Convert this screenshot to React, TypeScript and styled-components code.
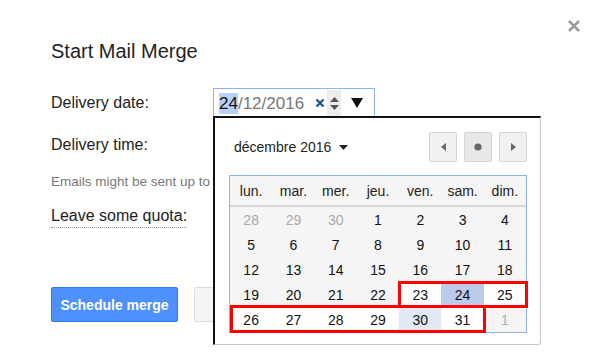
import styled, { createGlobalStyle } from 'styled-components';

const GlobalStyle = createGlobalStyle`
  html, body {
    margin: 0;
    padding: 0;
    background: #fff;
  }
  body {
    font-family: "Liberation Sans", Arial, sans-serif;
    color: #222;
  }
`;

const Dialog = styled.div`
  position: relative;
  width: 598px;
  height: 360px;
  box-sizing: border-box;
  padding: 38px 0 0 51px;
  overflow: hidden;
`;

const CloseButton = styled.div`
  position: absolute;
  top: 18px;
  right: 16px;
  width: 16px;
  height: 16px;
  display: flex;
  align-items: center;
  justify-content: center;
`;

const Title = styled.h1`
  margin: 0 0 24px;
  font-size: 20px;
  font-weight: normal;
  line-height: 26px;
  color: #222;
`;

const FieldRow = styled.div<{ $height?: number; $gap?: number }>`
  display: flex;
  align-items: center;
  height: ${(p) => p.$height ?? 30}px;
  margin-bottom: ${(p) => p.$gap ?? 0}px;
`;

const Label = styled.div<{ $dotted?: boolean }>`
  width: 162px;
  font-size: 16px;
  line-height: 20px;
  color: #222;
  ${(p) =>
    p.$dotted &&
    `
    width: auto;
    border-bottom: 1px dotted #999;
    padding-bottom: 1px;
  `}
`;

const Hint = styled.div`
  font-size: 13.5px;
  line-height: 16px;
  color: #777;
  white-space: nowrap;
  margin: 14px 0 16px;
`;

const DateInput = styled.div`
  display: flex;
  align-items: center;
  width: 162px;
  height: 30px;
  box-sizing: border-box;
  border: 1px solid #8ab2f4;
  padding: 0 6px 0 5px;
  font-size: 17px;
`;

const DatePart = styled.span<{ $selected?: boolean }>`
  color: ${(p) => (p.$selected ? '#111' : '#777')};
  background: ${(p) => (p.$selected ? '#b7d3fb' : 'transparent')};
  line-height: 21px;
`;

const ClearIcon = styled.div`
  margin-left: 11px;
  display: flex;
  align-items: center;
`;

const Spinner = styled.div`
  margin-left: 2px;
  width: 14px;
  height: 26px;
  background: #ececec;
  display: flex;
  flex-direction: column;
  align-items: center;
  justify-content: center;
  gap: 3px;
`;

const DropArrow = styled.div`
  margin-left: 10px;
  display: flex;
  align-items: center;
`;

const Actions = styled.div`
  display: flex;
  gap: 16px;
  margin-top: 59px;
`;

const Button = styled.button<{ $primary?: boolean }>`
  height: 35px;
  width: 127px;
  padding: 0;
  border-radius: 2px;
  font-family: "Liberation Sans", Arial, sans-serif;
  font-size: 14px;
  font-weight: bold;
  border: 1px solid ${(p) => (p.$primary ? '#3079ed' : '#dcdcdc')};
  background: ${(p) => (p.$primary ? '#4d90fe' : '#f5f5f5')};
  color: ${(p) => (p.$primary ? '#fff' : '#444')};
`;

const Popup = styled.div`
  position: absolute;
  left: 213px;
  top: 116px;
  width: 328px;
  height: 229px;
  box-sizing: border-box;
  background: #fff;
  border-top: 2px solid #111;
  border-left: 2px solid #111;
  border-right: 1px solid #c8c8c8;
  border-bottom: 1px solid #c8c8c8;
  border-bottom-right-radius: 3px;
  padding: 14px 13px 0 14px;
`;

const PopupHeader = styled.div`
  display: flex;
  align-items: center;
  justify-content: space-between;
  height: 30px;
  padding-left: 5px;
  margin-bottom: 13px;
`;

const MonthLabel = styled.div`
  display: flex;
  align-items: center;
  gap: 8px;
  font-size: 14px;
  color: #222;
`;

const NavGroup = styled.div`
  display: flex;
  gap: 7px;
`;

const NavButton = styled.div<{ $pressed?: boolean }>`
  width: 28px;
  height: 30px;
  box-sizing: border-box;
  border: 1px solid #d4d4d4;
  border-radius: 2px;
  background: ${(p) => (p.$pressed ? '#e8e8e8' : '#f1f1f1')};
  display: flex;
  align-items: center;
  justify-content: center;
`;

const Calendar = styled.div`
  position: relative;
  width: 298px;
  box-sizing: border-box;
  border: 1px solid #8ab2f4;
  background: #f5f5f5;
`;

const WeekHeader = styled.div`
  display: grid;
  grid-template-columns: repeat(7, 1fr);
  height: 29px;
  align-items: center;
  border-bottom: 2px solid #d6d6d6;
  font-size: 14px;
  color: #222;
  text-align: center;
`;

const DayGrid = styled.div`
  display: grid;
  grid-template-columns: repeat(7, 1fr);
  grid-auto-rows: 25px;
`;

const Day = styled.div<{ $muted?: boolean; $bg?: string }>`
  display: flex;
  align-items: center;
  justify-content: center;
  font-size: 14px;
  color: ${(p) => (p.$muted ? '#aaa' : '#111')};
  background: ${(p) => p.$bg ?? 'transparent'};
`;

const Mark = styled.div`
  position: absolute;
  box-sizing: border-box;
  border: 3px solid #f00;
  pointer-events: none;
`;

const weekdays = ['lun.', 'mar.', 'mer.', 'jeu.', 'ven.', 'sam.', 'dim.'];

type Cell = { n: number; muted?: boolean; bg?: string };

const cells: Cell[] = [
  { n: 28, muted: true },
  { n: 29, muted: true },
  { n: 30, muted: true },
  ...Array.from({ length: 31 }, (_, i) => {
    const n = i + 1;
    let bg: string | undefined;
    if (n === 24) bg = '#bccbe9';
    else if (n === 30) bg = '#e2e9f6';
    else if (n >= 23) bg = '#fff';
    return { n, bg };
  }),
  { n: 1, muted: true },
];

export default function App() {
  return (
    <>
      <GlobalStyle />
      <Dialog>
        <CloseButton>
          <svg width="14" height="14" viewBox="0 0 14 14">
            <path d="M2 2 L12 12 M12 2 L2 12" stroke="#9a9a9a" strokeWidth="2.6" />
          </svg>
        </CloseButton>

        <Title>Start Mail Merge</Title>

        <FieldRow $gap={12}>
          <Label>Delivery date:</Label>
          <DateInput>
            <DatePart $selected>24</DatePart>
            <DatePart>/12/2016</DatePart>
            <ClearIcon>
              <svg width="10" height="10" viewBox="0 0 10 10">
                <path d="M1.5 1.5 L8.5 8.5 M8.5 1.5 L1.5 8.5" stroke="#1e4f9c" strokeWidth="2.2" />
              </svg>
            </ClearIcon>
            <Spinner>
              <svg width="9" height="5" viewBox="0 0 9 5">
                <path d="M0 5 L4.5 0 L9 5 Z" fill="#555" />
              </svg>
              <svg width="9" height="5" viewBox="0 0 9 5">
                <path d="M0 0 L4.5 5 L9 0 Z" fill="#555" />
              </svg>
            </Spinner>
            <DropArrow>
              <svg width="12" height="10" viewBox="0 0 12 10">
                <path d="M0 0 L12 0 L6 10 Z" fill="#111" />
              </svg>
            </DropArrow>
          </DateInput>
        </FieldRow>

        <FieldRow>
          <Label>Delivery time:</Label>
        </FieldRow>

        <Hint>Emails might be sent up to</Hint>

        <FieldRow $height={22}>
          <Label $dotted>Leave some quota:</Label>
        </FieldRow>

        <Actions>
          <Button $primary>Schedule merge</Button>
          <Button aria-label="Cancel" />
        </Actions>

        <Popup>
          <PopupHeader>
            <MonthLabel>
              décembre 2016
              <svg width="9" height="5" viewBox="0 0 9 5">
                <path d="M0 0 L9 0 L4.5 5 Z" fill="#222" />
              </svg>
            </MonthLabel>
            <NavGroup>
              <NavButton>
                <svg width="5" height="8" viewBox="0 0 5 8">
                  <path d="M5 0 L0 4 L5 8 Z" fill="#666" />
                </svg>
              </NavButton>
              <NavButton $pressed>
                <svg width="8" height="8" viewBox="0 0 8 8">
                  <circle cx="4" cy="4" r="3.6" fill="#666" />
                </svg>
              </NavButton>
              <NavButton>
                <svg width="5" height="8" viewBox="0 0 5 8">
                  <path d="M0 0 L5 4 L0 8 Z" fill="#666" />
                </svg>
              </NavButton>
            </NavGroup>
          </PopupHeader>

          <Calendar>
            <WeekHeader>
              {weekdays.map((d) => (
                <div key={d}>{d}</div>
              ))}
            </WeekHeader>
            <DayGrid>
              {cells.map((c, i) => (
                <Day key={i} $muted={c.muted} $bg={c.bg}>
                  {c.n}
                </Day>
              ))}
            </DayGrid>
            <Mark style={{ left: 168, top: 105, width: 130, height: 27 }} />
            <Mark style={{ left: 0, top: 129, width: 256, height: 28 }} />
          </Calendar>
        </Popup>
      </Dialog>
    </>
  );
}
